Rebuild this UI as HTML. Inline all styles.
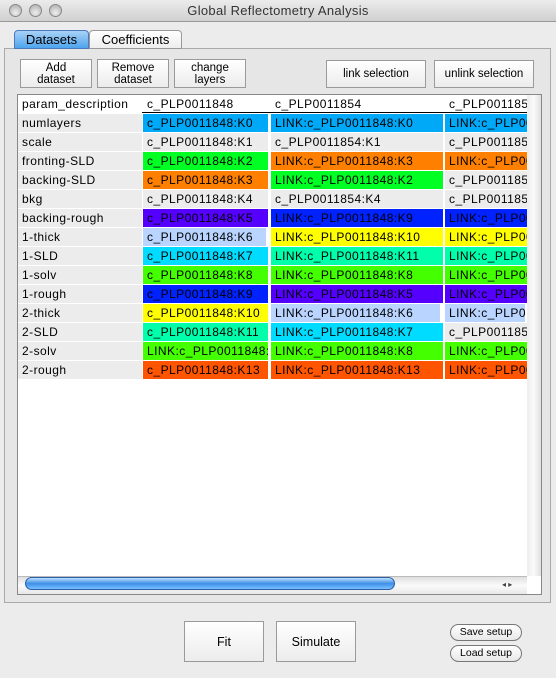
<!DOCTYPE html>
<html><head><style>
*{margin:0;padding:0;box-sizing:border-box}
body{width:556px;height:678px;background:#ececec;font-family:"Liberation Sans",sans-serif;position:relative;overflow:hidden;font-size:12px;color:#000}
.a{position:absolute}
.title{left:0;top:0;width:556px;height:22px;background:linear-gradient(#ececec,#d0d0d0);border-bottom:1px solid #999;text-align:center;font-size:13px;line-height:22px;color:#333;letter-spacing:0.3px}
.dot{width:13px;height:13px;border-radius:50%;background:radial-gradient(circle at 50% 70%,#eee,#aaa);border:1px solid #888;top:4px}
.btn{background:linear-gradient(#fff,#ececec);border:1px solid #9a9a9a;font-size:11.5px;text-align:center;line-height:12px;display:flex;align-items:center;justify-content:center}
.pill{background:linear-gradient(#fff,#e8e8e8);border:1px solid #777;border-radius:9px;font-size:10.5px;text-align:center;line-height:15px}
.row{position:absolute;left:18px;height:19px;font-size:12px;line-height:18px;letter-spacing:0.45px}
.row div{position:absolute;top:0;height:18px;padding-left:4px;white-space:nowrap;overflow:hidden}
.l{left:0;width:124px;background:#ececec}
.c1{left:125px;width:125px}
.c2{left:253px;width:172px}
.c3{left:427px;width:82px}
</style></head><body>
<div class="a title">Global Reflectometry Analysis</div>
<div class="a dot" style="left:9px"></div>
<div class="a dot" style="left:29px"></div>
<div class="a dot" style="left:49px"></div>

<div class="a" style="left:4px;top:48px;width:547px;height:555px;border:1px solid #aaa;background:#e6e6e6"></div>
<div class="a" style="left:14px;top:30px;width:75px;height:19px;border:1px solid #4a79c0;border-radius:4px 4px 0 0;background:linear-gradient(#a9d2f6,#4ea4ee);text-align:center;font-size:13px;line-height:18px">Datasets</div>
<div class="a" style="left:89px;top:30px;width:93px;height:19px;border:1px solid #999;border-radius:4px 4px 0 0;background:linear-gradient(#fff,#eee);text-align:center;font-size:13px;line-height:18px">Coefficients</div>

<div class="a btn" style="left:20px;top:59px;width:72px;height:29px">Add<br>dataset</div>
<div class="a btn" style="left:97px;top:59px;width:72px;height:29px">Remove<br>dataset</div>
<div class="a btn" style="left:174px;top:59px;width:72px;height:29px">change<br>layers</div>
<div class="a btn" style="left:326px;top:60px;width:100px;height:28px">link selection</div>
<div class="a btn" style="left:434px;top:60px;width:100px;height:28px">unlink selection</div>

<div class="a" style="left:17px;top:94px;width:525px;height:501px;border:1px solid #888;background:#fff"></div>
<div class="a" style="left:527px;top:95px;width:14px;height:481px;background:linear-gradient(90deg,#eee,#fafafa,#e0e0e0)"></div>
<div class="row" style="top:95px;height:18px;border-bottom:1px solid #000;width:509px"><div class="l" style="background:#fff">param_description</div><div class="c1">c_PLP0011848</div><div class="c2">c_PLP0011854</div><div class="c3">c_PLP0011855</div></div>

<div class="row" style="top:114px"><div class="l">numlayers</div><div class="c1" style="background:#00a8f8">c_PLP0011848:K0</div><div class="c2" style="background:#00a8f8">LINK:c_PLP0011848:K0</div><div class="c3" style="background:#00a8f8">LINK:c_PLP0011848</div></div>
<div class="row" style="top:133px"><div class="l">scale</div><div class="c1" style="background:#ececec">c_PLP0011848:K1</div><div class="c2" style="background:#ececec">c_PLP0011854:K1</div><div class="c3" style="background:#ececec">c_PLP0011855</div></div>
<div class="row" style="top:152px"><div class="l">fronting-SLD</div><div class="c1" style="background:#00ff22">c_PLP0011848:K2</div><div class="c2" style="background:#ff8000">LINK:c_PLP0011848:K3</div><div class="c3" style="background:#ff8000">LINK:c_PLP0011848</div></div>
<div class="row" style="top:171px"><div class="l">backing-SLD</div><div class="c1" style="background:#ff8000">c_PLP0011848:K3</div><div class="c2" style="background:#00ff22">LINK:c_PLP0011848:K2</div><div class="c3" style="background:#ececec">c_PLP0011855</div></div>
<div class="row" style="top:190px"><div class="l">bkg</div><div class="c1" style="background:#ececec">c_PLP0011848:K4</div><div class="c2" style="background:#ececec">c_PLP0011854:K4</div><div class="c3" style="background:#ececec">c_PLP0011855</div></div>
<div class="row" style="top:209px"><div class="l">backing-rough</div><div class="c1" style="background:#5500ff">c_PLP0011848:K5</div><div class="c2" style="background:#0022ff">LINK:c_PLP0011848:K9</div><div class="c3" style="background:#0022ff">LINK:c_PLP0011848</div></div>
<div class="row" style="top:228px"><div class="l">1-thick</div><div class="c1" style="background:#b8d4ff;width:123px">c_PLP0011848:K6</div><div class="c2" style="background:#ffff00">LINK:c_PLP0011848:K10</div><div class="c3" style="background:#ffff00">LINK:c_PLP0011848</div></div>
<div class="row" style="top:247px"><div class="l">1-SLD</div><div class="c1" style="background:#00dcff">c_PLP0011848:K7</div><div class="c2" style="background:#00ffaa">LINK:c_PLP0011848:K11</div><div class="c3" style="background:#00ffaa">LINK:c_PLP0011848</div></div>
<div class="row" style="top:266px"><div class="l">1-solv</div><div class="c1" style="background:#44ff00">c_PLP0011848:K8</div><div class="c2" style="background:#44ff00">LINK:c_PLP0011848:K8</div><div class="c3" style="background:#44ff00">LINK:c_PLP0011848</div></div>
<div class="row" style="top:285px"><div class="l">1-rough</div><div class="c1" style="background:#0022ff">c_PLP0011848:K9</div><div class="c2" style="background:#5500ff">LINK:c_PLP0011848:K5</div><div class="c3" style="background:#5500ff">LINK:c_PLP0011848</div></div>
<div class="row" style="top:304px"><div class="l">2-thick</div><div class="c1" style="background:#ffff00">c_PLP0011848:K10</div><div class="c2" style="background:#b8d4ff;width:169px">LINK:c_PLP0011848:K6</div><div class="c3" style="background:#b8d4ff;width:80px">LINK:c_PLP0011848</div></div>
<div class="row" style="top:323px"><div class="l">2-SLD</div><div class="c1" style="background:#00ffaa">c_PLP0011848:K11</div><div class="c2" style="background:#00dcff">LINK:c_PLP0011848:K7</div><div class="c3" style="background:#ececec">c_PLP0011855</div></div>
<div class="row" style="top:342px"><div class="l">2-solv</div><div class="c1" style="background:#44ff00">LINK:c_PLP0011848:K12</div><div class="c2" style="background:#44ff00">LINK:c_PLP0011848:K8</div><div class="c3" style="background:#44ff00">LINK:c_PLP0011848</div></div>
<div class="row" style="top:361px"><div class="l">2-rough</div><div class="c1" style="background:#ff5500">c_PLP0011848:K13</div><div class="c2" style="background:#ff5500">LINK:c_PLP0011848:K13</div><div class="c3" style="background:#ff5500">LINK:c_PLP0011848</div></div>

<div class="a" style="left:18px;top:576px;width:509px;height:18px;background:linear-gradient(#e0e0e0,#fafafa,#e8e8e8);border-top:1px solid #bbb"></div>
<div class="a" style="left:25px;top:577px;width:370px;height:13px;border-radius:7px;border:1px solid #2c5fa8;background:linear-gradient(#bde0ff,#3d8fe6 50%,#7cc0ff)"></div>
<div class="a" style="left:502px;top:577px;width:24px;height:15px;font-size:8px;color:#444;line-height:15px">◂ ▸</div>

<div class="a btn" style="left:184px;top:621px;width:80px;height:41px;font-size:12.5px">Fit</div>
<div class="a btn" style="left:276px;top:621px;width:80px;height:41px;font-size:12.5px">Simulate</div>
<div class="a pill" style="left:450px;top:624px;width:72px;height:17px">Save setup</div>
<div class="a pill" style="left:450px;top:645px;width:72px;height:17px">Load setup</div>
</body></html>
